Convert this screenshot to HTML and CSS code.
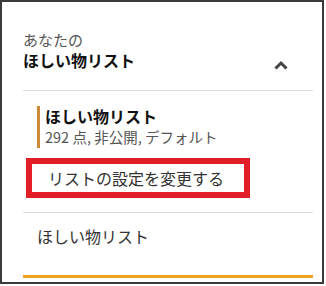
FILE: index.html
```html
<!DOCTYPE html>
<html lang="ja">
<head>
<meta charset="utf-8">
<link rel="stylesheet" href="styles.css">
</head>
<body>
<div class="frame">
  <div class="header">
    <div class="header-text">
      <div class="header-label">あなたの</div>
      <div class="header-title">ほしい物リスト</div>
    </div>
    <svg class="chevron" width="14" height="10" viewBox="0 0 14 10"><polyline points="1.5,8.5 7,3 12.5,8.5" fill="none" stroke="#444" stroke-width="3"/></svg>
  </div>
  <div class="current">
    <div class="current-title">ほしい物リスト</div>
    <div class="current-sub">292 点, 非公開, デフォルト</div>
  </div>
  <div class="settings">リストの設定を変更する</div>
  <div class="item">ほしい物リスト</div>
  <div class="bottom-bar"></div>
</div>
</body>
</html>
```
FILE: styles.css
```css
html, body {
  margin: 0;
  padding: 0;
  background: #fff;
}
body {
  font-family: "Noto Sans CJK JP", "Noto Sans", sans-serif;
  color: #333;
}
.frame {
  box-sizing: border-box;
  width: 324px;
  height: 284px;
  border: 2px solid #3a3a3a;
  padding: 28px 9px 0 21px;
}
.header {
  display: flex;
  justify-content: space-between;
  align-items: flex-end;
  padding-bottom: 20px;
  border-bottom: 1px solid #dcdcdc;
}
.header-label {
  font-size: 15px;
  line-height: 20px;
  color: #555;
}
.header-title {
  font-size: 16px;
  line-height: 20px;
  font-weight: bold;
  color: #111;
}
.chevron {
  display: block;
  margin-right: 25px;
  margin-bottom: 0;
}
.current {
  margin: 15px 0 0 14px;
  border-left: 3px solid #cc8a38;
  padding-left: 5px;
}
.current-title {
  font-size: 16px;
  line-height: 20px;
  font-weight: bold;
  color: #111;
}
.current-sub {
  font-size: 14.5px;
  line-height: 22px;
  color: #555;
}
.settings {
  box-sizing: border-box;
  margin: 10px 0 0 3px;
  width: 224px;
  height: 40px;
  border: 6px solid #e21f26;
  padding-left: 16px;
  font-size: 16px;
  line-height: 28px;
  color: #333;
}
.item {
  margin-top: 14px;
  border-top: 1px solid #dcdcdc;
  padding: 13px 0 2px 14px;
  font-size: 16px;
  line-height: 20px;
  color: #333;
}
.bottom-bar {
  margin-top: 27px;
  height: 3px;
  background: #f0a21e;
}
```
